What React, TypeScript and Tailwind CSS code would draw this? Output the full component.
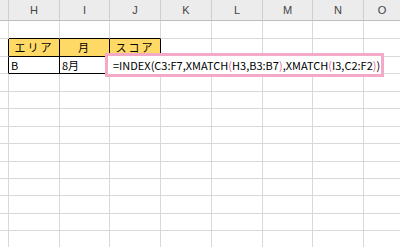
import React from "react";

const colWidths = [9, 51, 50, 51, 51, 51, 50, 51, 37];
const colLabels = ["", "H", "I", "J", "K", "L", "M", "N", "O"];
const rowHeights = [18, 18, 17, 18, 17, 18, 17, 18, 17, 17, 18, 17, 18];

const GRID = "#d9d9d9";
const BLACK = "#000000";

type CellSpec = { text?: string; bg?: string; align?: "left" | "center" };

function cellAt(r: number, c: number): CellSpec {
  if (r === 1) {
    if (c === 1) return { text: "エリア", bg: "#ffd966", align: "center" };
    if (c === 2) return { text: "月", bg: "#ffd966", align: "center" };
    if (c === 3) return { text: "スコア", bg: "#ffd966", align: "center" };
  }
  if (r === 2) {
    if (c === 1) return { text: "B", align: "left" };
    if (c === 2) return { text: "8月", align: "left" };
  }
  return {};
}

function inTable(r: number, c: number) {
  return r >= 1 && r <= 2 && c >= 1 && c <= 3;
}

function borderRightColor(r: number, c: number) {
  if (inTable(r, c)) return BLACK;
  if (c === 0 && r >= 1 && r <= 2) return BLACK;
  return GRID;
}

function borderBottomColor(r: number, c: number) {
  if (inTable(r, c)) return BLACK;
  if (r === 0 && c >= 1 && c <= 3) return BLACK;
  return GRID;
}

const P = "text-[#e46a9c]";

export default function App() {
  return (
    <div
      className="relative w-[400px] h-[247px] overflow-hidden bg-white"
      style={{ fontFamily: '"Noto Sans CJK JP", "Noto Sans", sans-serif' }}
    >
      <div
        className="grid"
        style={{
          gridTemplateColumns: colWidths.map((w) => `${w}px`).join(" "),
        }}
      >
        {colLabels.map((label, c) => (
          <div
            key={`h${c}`}
            className="h-[21px] bg-[#ececec] border-r border-b border-r-[#cfcfcf] border-b-[#bdbdbd] flex items-center justify-center text-[11px] text-[#444] pt-[1px]"
            style={{ fontFamily: '"Liberation Sans", Arial, sans-serif' }}
          >
            {label}
          </div>
        ))}
        {rowHeights.map((h, r) =>
          colWidths.map((_, c) => {
            const cell = cellAt(r, c);
            return (
              <div
                key={`${r}-${c}`}
                className={`border-r border-b flex items-center text-[11px] text-black leading-none ${
                  cell.align === "center" ? "justify-center tracking-[2px]" : "pl-[2px]"
                }`}
                style={{
                  height: h,
                  backgroundColor: cell.bg ?? "#ffffff",
                  borderRightColor: borderRightColor(r, c),
                  borderBottomColor: borderBottomColor(r, c),
                }}
              >
                {cell.text}
              </div>
            );
          })
        )}
      </div>

      {/* formula overflowing from J3, boxed in pink */}
      <div className="absolute left-[105px] top-[53px] w-[279px] h-[24px] border-[3px] border-[#f4a9c7] bg-white flex items-center pl-[5px] whitespace-nowrap text-[11px] text-black leading-none">
        <span>
          =INDEX(C3:F7,XMATCH<span className={P}>(</span>H3,B3:B7<span className={P}>)</span>,XMATCH
          <span className={P}>(</span>I3,C2:F2<span className={P}>)</span>)
        </span>
      </div>
    </div>
  );
}
